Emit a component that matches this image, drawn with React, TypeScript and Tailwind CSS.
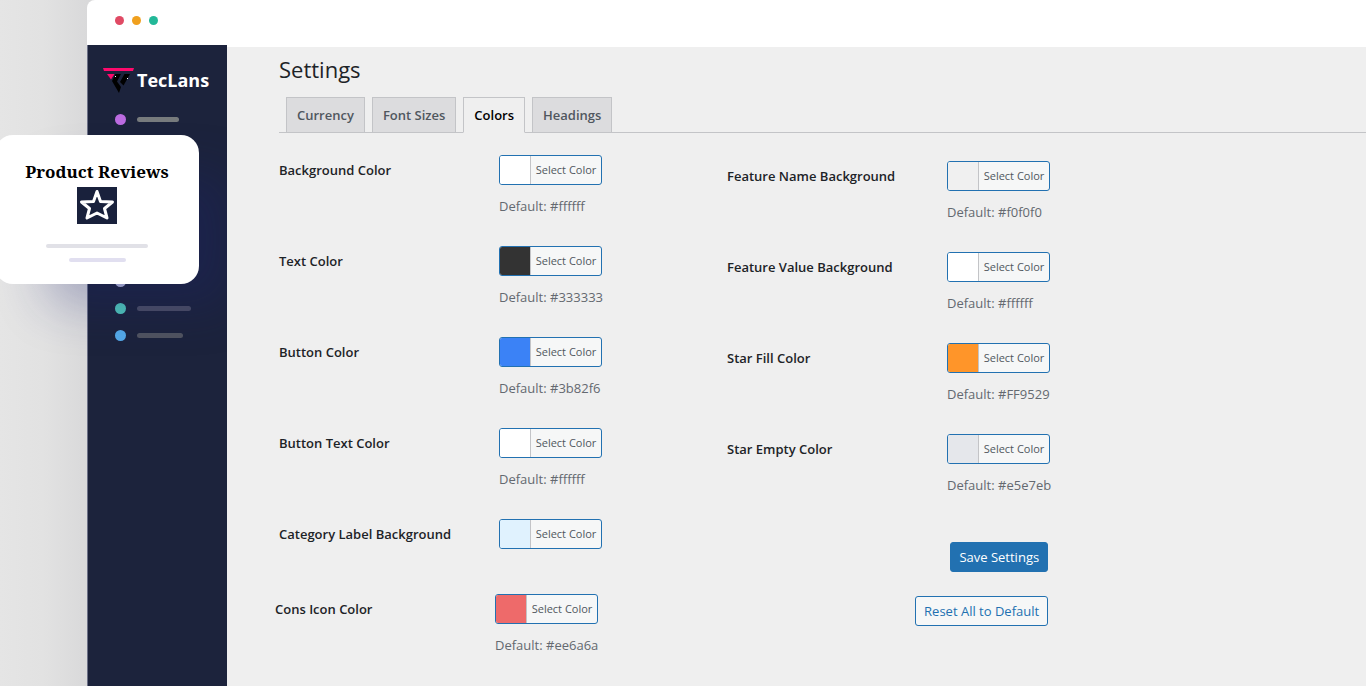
import { useState } from "react";

type ColorSetting = {
  id: string;
  label: string;
  swatch: string;
  defaultValue?: string;
};

const tabs = ["Currency", "Font Sizes", "Colors", "Headings"];

const generalColors: ColorSetting[] = [
  { id: "background", label: "Background Color", swatch: "bg-white", defaultValue: "#ffffff" },
  { id: "text", label: "Text Color", swatch: "bg-[#333333]", defaultValue: "#333333" },
  { id: "button", label: "Button Color", swatch: "bg-[#3b82f6]", defaultValue: "#3b82f6" },
  { id: "button-text", label: "Button Text Color", swatch: "bg-white", defaultValue: "#ffffff" },
  { id: "category-label", label: "Category Label Background", swatch: "bg-[#e0f2fe]" },
];

const iconColors: ColorSetting[] = [
  { id: "cons-icon", label: "Cons Icon Color", swatch: "bg-[#ee6a6a]", defaultValue: "#ee6a6a" },
];

const featureColors: ColorSetting[] = [
  { id: "feature-name", label: "Feature Name Background", swatch: "bg-[#f0f0f0]", defaultValue: "#f0f0f0" },
  { id: "feature-value", label: "Feature Value Background", swatch: "bg-white", defaultValue: "#ffffff" },
  { id: "star-fill", label: "Star Fill Color", swatch: "bg-[#ff9529]", defaultValue: "#FF9529" },
  { id: "star-empty", label: "Star Empty Color", swatch: "bg-[#e5e7eb]", defaultValue: "#e5e7eb" },
];

const menuItems = [
  { dot: "bg-[#bb6be0]", bar: "w-[42px] bg-[#777b7d]" },
  { dot: "bg-[#e0526e]", bar: "w-[50px] bg-[#4a4d62]" },
  { dot: "bg-[#f0a020]", bar: "w-[46px] bg-[#4a4d62]" },
  { dot: "bg-[#5a7be0]", bar: "w-[50px] bg-[#4a4d62]" },
  { dot: "bg-[#e07b5a]", bar: "w-[42px] bg-[#4a4d62]" },
  { dot: "bg-[#b4b8d8]", bar: "w-0" },
  { dot: "bg-[#b4b8d8]", bar: "w-0" },
  { dot: "bg-[#4fc4b8]", bar: "w-[54px] bg-[#4a4d62]" },
  { dot: "bg-[#54a9e8]", bar: "w-[46px] bg-[#50535f]" },
];

function ColorRow({ id, label, swatch, defaultValue }: ColorSetting) {
  return (
    <div className="flex">
      <label htmlFor={id} className="w-[220px] shrink-0 text-[13px] leading-[30px] font-semibold text-[#1d2327]">
        {label}
      </label>
      <div>
        <button
          id={id}
          type="button"
          className="flex h-[30px] w-[103px] overflow-hidden rounded-[3px] border border-[#2271b1] bg-[#f6f7f7]"
        >
          <span className={`h-full w-[31px] shrink-0 border-r border-[#c3c4c7] ${swatch}`} />
          <span className="flex-1 text-center text-[11px] leading-[28px] whitespace-nowrap text-[#50575e]">
            Select Color
          </span>
        </button>
        {defaultValue && (
          <p className="mt-3 text-[13px] leading-[18px] text-[#646970]">Default: {defaultValue}</p>
        )}
      </div>
    </div>
  );
}

function Logo() {
  return (
    <svg width="32" height="26" viewBox="0 0 32 26" aria-hidden="true">
      <path d="M0 0h31l-1 3H1z" fill="#ff0a6c" />
      <path d="M4 6h7.500l-3.500 5.500z" fill="#ff0a6c" />
      <path d="M12.500 6h5.500l-4 7.500 4 5.500-2 6-7-12z" fill="#000" />
      <path d="M21.500 6h5.500l-6.500 11.500-3.500-3.500z" fill="#000" />
      <path d="M12 8h1v1h-1zM24 10h1v1h-1z" fill="#fff" />
    </svg>
  );
}

function ReviewCard() {
  return (
    <div className="absolute top-[135px] -left-[5px] flex h-[149px] w-[204px] flex-col items-center rounded-[18px] bg-white pt-6 shadow-[40px_30px_50px_-10px_rgba(30,35,120,0.28)]">
      <h2 className="font-['Noto_Serif','Liberation_Serif',serif] text-[17px] leading-[26px] font-bold text-black">
        Product Reviews
      </h2>
      <div className="mt-[2px] h-[37px] w-10 bg-[#19213c]">
        <svg
          width="40"
          height="37"
          viewBox="0 0 40 37"
          fill="none"
          stroke="#fff"
          strokeWidth="3"
          strokeLinejoin="round"
          aria-hidden="true"
        >
          <path d="M20 4.500l3.500 10 12 .5-8 6.500 2.500 9.500-10-5-10 5 2.500-9.500-8-6.500 12-.5z" />
        </svg>
      </div>
      <div className="mt-5 h-1 w-[102px] rounded-full bg-[#e1e1e7]" />
      <div className="mt-[10px] h-1 w-[57px] rounded-full bg-[#e1dff0]" />
    </div>
  );
}

export default function App() {
  const [activeTab, setActiveTab] = useState("Colors");

  return (
    <div className="relative isolate flex min-h-screen overflow-hidden bg-[#efefef] font-['Open_Sans','Noto_Sans',sans-serif]">
      <div className="w-[87px] shrink-0 bg-linear-to-r from-[#e5e5e5] via-[#e2e2e2] to-[#d9d9da]" />

      <div className="flex min-w-0 flex-1 flex-col bg-linear-to-r from-[#d9d9da] from-[8px] to-[#efefef] to-[8px]">
        {/* Window bar */}
        <header className="flex h-[47px] shrink-0 gap-2 rounded-tl-lg bg-white pt-4 pl-7">
          <span className="size-[9px] rounded-full bg-[#e04a64]" />
          <span className="size-[9px] rounded-full bg-[#f0a01e]" />
          <span className="size-[9px] rounded-full bg-[#22b898]" />
        </header>

        <div className="flex flex-1">
          <aside className="-mt-[2px] w-[140px] shrink-0 border-l border-[#6d7187] bg-[#1c233c]">
            <div className="flex gap-[2px] pt-[23px] pl-[15px]">
              <Logo />
              <span className="text-[18px] leading-6 font-bold text-white">TecLans</span>
            </div>
            <ul className="mt-3 flex flex-col">
              {menuItems.map((item, i) => (
                <li key={i} className="flex h-[27px] items-center gap-[11px] pl-[27px]">
                  <span className={`size-[11px] rounded-full ${item.dot}`} />
                  <span className={`h-[5px] rounded-full ${item.bar}`} />
                </li>
              ))}
            </ul>
          </aside>

          {/* z-20 keeps the card's shadow off the settings panel */}
          <main className="z-20 min-w-0 flex-1 bg-[#efefef] pt-2 pl-12">
            <div className="pl-1">
              <h1 className="text-[22px] leading-[28px] text-[#1d2327]">Settings</h1>
              <nav className="mt-[14px] flex gap-[7px] border-b border-[#c3c4c7] pl-[7px]">
                {tabs.map((tab) => (
                  <a
                    key={tab}
                    href="#"
                    onClick={() => setActiveTab(tab)}
                    className={`border border-[#c3c4c7] px-[10px] text-[13px] leading-[34px] font-semibold whitespace-nowrap ${
                      tab === activeTab
                        ? "-mb-px border-b-[#efefef] bg-[#efefef] text-black"
                        : "border-b-0 bg-[#dcdcde] text-[#50575e]"
                    }`}
                  >
                    {tab}
                  </a>
                ))}
              </nav>
            </div>

            <form className="flex pt-[22px]" onSubmit={(e) => e.preventDefault()}>
              <div className="w-[452px] shrink-0">
                <div className="flex flex-col gap-[31px] pl-1">
                  {generalColors.map((setting) => (
                    <ColorRow key={setting.id} {...setting} />
                  ))}
                </div>
                <div className="mt-[45px]">
                  {iconColors.map((setting) => (
                    <ColorRow key={setting.id} {...setting} />
                  ))}
                </div>
              </div>

              <div className="pt-[6px]">
                <div className="flex flex-col gap-[31px]">
                  {featureColors.map((setting) => (
                    <ColorRow key={setting.id} {...setting} />
                  ))}
                </div>
                <div className="mt-12 flex flex-col items-end gap-6 pr-[3px]">
                  <button
                    type="submit"
                    className="h-[30px] rounded-[3px] border border-[#2271b1] bg-[#2271b1] px-2 text-[13px] leading-[28px] text-white"
                  >
                    Save Settings
                  </button>
                  <button
                    type="button"
                    className="h-[30px] rounded-[3px] border border-[#2271b1] bg-[#f6f7f7] px-2 text-[13px] leading-[28px] text-[#2271b1]"
                  >
                    Reset All to Default
                  </button>
                </div>
              </div>
            </form>
          </main>
        </div>
      </div>

      <ReviewCard />
    </div>
  );
}
